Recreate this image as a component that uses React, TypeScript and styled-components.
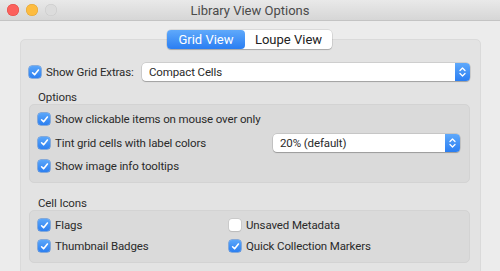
import * as React from 'react';
import styled, { createGlobalStyle } from 'styled-components';

//-----------------------------------------------------------------------------//

const Global = createGlobalStyle`
  html, body {
    margin:     0;
    padding:    0;
    background: #ececec;
  }
  body {
    font-family:    Roboto, "Liberation Sans", sans-serif;
    font-size:      11.5px;
    letter-spacing: -0.12px;
    color:          #2a2a2a;
  }
`;

const Window = styled.div`
  width:          500px;
  height:         271px;
  overflow:       hidden;
  background:     #ececec;
  display:        flex;
  flex-direction: column;
`;

const TitleBar = styled.div`
  position:        relative;
  height:          21px;
  flex-shrink:     0;
  display:         flex;
  align-items:     center;
  justify-content: center;
  background:      linear-gradient(#e9e9e9, #d6d6d6);
  border-bottom:   1px solid #c4c4c4;
  box-sizing:      border-box;
  font-size:       13px;
  letter-spacing:  0;
  color:           #4a4a4a;
`;

const Lights = styled.div`
  position: absolute;
  left:     7px;
  top:      4px;
  display:  flex;
  gap:      7px;
`;

const Light = styled.span<{ $c: string; $b: string }>`
  width:         12px;
  height:        12px;
  border-radius: 50%;
  background:    ${p => p.$c};
  box-shadow:    inset 0 0 0 0.5px ${p => p.$b};
`;

const Body = styled.div`
  display:        flex;
  flex-direction: column;
  align-items:    center;
  padding-top:    9px;
`;

const Segmented = styled.div`
  position:      relative;
  z-index:       1;
  display:       flex;
  height:        19px;
  margin-left:   -1px;
  border-radius: 4px;
  background:    #fff;
  box-shadow:    0 0 0 0.5px rgba(0,0,0,0.15), 0 1px 1px rgba(0,0,0,0.2);
`;

const Segment = styled.div<{ $on?: boolean; $w: number }>`
  width:           ${p => p.$w}px;
  display:         flex;
  align-items:     center;
  justify-content: center;
  font-size:       13px;
  letter-spacing:  0;
  border-radius:   4px;
  color:           ${p => p.$on ? '#fff' : '#222'};
  background:      ${p => p.$on ? 'linear-gradient(#5fa9fb, #2a7ef2)' : 'transparent'};
`;

const TabBox = styled.div`
  align-self:     stretch;
  margin:         -10px 19px 0 20px;
  height:         260px;
  background:     #e3e3e3;
  border:         1px solid #dadada;
  border-radius:  5px;
  padding:        23px 10px 0 8px;
  box-sizing:     border-box;
  display:        flex;
  flex-direction: column;
`;

const Row = styled.div`
  display:     flex;
  align-items: center;
  height:      18px;
`;

const Check = styled.span<{ $on?: boolean }>`
  width:           12px;
  height:          12px;
  flex-shrink:     0;
  box-sizing:      border-box;
  border-radius:   3px;
  display:         flex;
  align-items:     center;
  justify-content: center;
  margin-right:    5px;
  background:      ${p => p.$on ? 'linear-gradient(#5aa6fa, #2c7ff0)' : '#fff'};
  box-shadow:      ${p => p.$on ? '0 0 0 0.5px #2f78d8' : '0 0 0 0.5px #bdbdbd, 0 0.5px 1px rgba(0,0,0,0.15)'};
`;

const Label = styled.span`
  white-space: nowrap;
`;

const Popup = styled.div<{ $w: number }>`
  width:         ${p => p.$w}px;
  margin-left:   auto;
  height:        18px;
  box-sizing:    border-box;
  display:       flex;
  align-items:   center;
  background:    #fff;
  border-radius: 4px;
  box-shadow:    0 0 0 0.5px rgba(0,0,0,0.18), 0 1px 1px rgba(0,0,0,0.22);
  padding-left:  7px;
  overflow:      hidden;
`;

const PopupText = styled.span`
  flex: 1;
`;

const Stepper = styled.span`
  width:           15px;
  height:          18px;
  display:         flex;
  align-items:     center;
  justify-content: center;
  background:      linear-gradient(#5fa9fb, #2a7ef2);
`;

const GroupTitle = styled.div<{ $mt: number }>`
  margin:      ${p => p.$mt}px 0 0 9px;
  height:      14px;
  line-height: 14px;
  color:       #2e2e2e;
`;

const Group = styled.div<{ $h: number }>`
  height:         ${p => p.$h}px;
  box-sizing:     border-box;
  background:     #dadada;
  border:         1px solid #d3d3d3;
  border-radius:  5px;
  padding:        5px 9px 0 8px;
  display:        flex;
  flex-direction: column;
  gap:            5.5px;
`;

const Grid = styled.div`
  display:               grid;
  grid-template-columns: 191px 1fr;
  row-gap:               3px;
`;

//-----------------------------------------------------------------------------//

const Tick = () => (
  <svg width="9" height="9" viewBox="0 0 9 9">
    <path d="M1.6 4.8 L3.6 6.8 L7.4 2" fill="none" stroke="#fff" strokeWidth="1.6"
      strokeLinecap="round" strokeLinejoin="round" />
  </svg>
);

const Arrows = () => (
  <svg width="9" height="12" viewBox="0 0 9 12">
    <path d="M2 4.5 L4.5 2 L7 4.5 M2 7.5 L4.5 10 L7 7.5" fill="none" stroke="#fff"
      strokeWidth="1.3" strokeLinecap="round" strokeLinejoin="round" />
  </svg>
);

const Box = ({ on, text }: { on?: boolean; text: string }) => (
  <Row>
    <Check $on={on}>{on && <Tick />}</Check>
    <Label>{text}</Label>
  </Row>
);

const Select = ({ w, text }: { w: number; text: string }) => (
  <Popup $w={w}>
    <PopupText>{text}</PopupText>
    <Stepper><Arrows /></Stepper>
  </Popup>
);

//-----------------------------------------------------------------------------//

export default function App() {
  return (
    <Window>
      <Global />
      <TitleBar>
        <Lights>
          <Light $c="#fc605c" $b="#de4a45" />
          <Light $c="#fdbc40" $b="#dea236" />
          <Light $c="#dcdcdc" $b="#c8c8c8" />
        </Lights>
        Library View Options
      </TitleBar>
      <Body>
        <Segmented>
          <Segment $on $w={78}>Grid View</Segment>
          <Segment $w={87}>Loupe View</Segment>
        </Segmented>
        <TabBox>
          <Row>
            <Check $on><Tick /></Check>
            <Label>Show Grid Extras:</Label>
            <Select w={328} text="Compact Cells" />
          </Row>
          <GroupTitle $mt={9}>Options</GroupTitle>
          <Group $h={79}>
            <Box on text="Show clickable items on mouse over only" />
            <Row>
              <Check $on><Tick /></Check>
              <Label>Tint grid cells with label colors</Label>
              <Select w={187} text="20% (default)" />
            </Row>
            <Box on text="Show image info tooltips" />
          </Group>
          <GroupTitle $mt={13}>Cell Icons</GroupTitle>
          <Group $h={53}>
            <Grid>
              <Box on text="Flags" />
              <Box text="Unsaved Metadata" />
              <Box on text="Thumbnail Badges" />
              <Box on text="Quick Collection Markers" />
            </Grid>
          </Group>
        </TabBox>
      </Body>
    </Window>
  );
}
